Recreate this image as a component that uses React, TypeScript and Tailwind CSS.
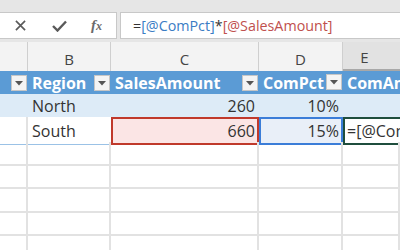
import React from 'react';

const font = { fontFamily: '"Open Sans", "Noto Sans", Arial, sans-serif' };

const Dropdown = () => (
  <span className="flex h-[16px] w-[16px] items-center justify-center border border-[#c6c6c6] bg-[#f4f4f4]">
    <svg width="8" height="5" viewBox="0 0 8 5">
      <path d="M0 0 L8 0 L4 4.5 Z" fill="#555" />
    </svg>
  </span>
);

const cols = 'grid grid-cols-[28px_83px_148px_84px_1fr]';

export default function App() {
  return (
    <div className="h-[250px] w-[400px] overflow-hidden bg-white" style={font}>
      {/* formula bar */}
      <div className="flex h-[42px] items-start gap-[3px] bg-[#e6e6e6] pt-[12px]">
        <div className="flex h-[27px] w-[117px] items-center border border-l-0 border-[#c8c8c8] bg-white text-[#5a5a5a]">
          <svg className="ml-[15px]" width="11" height="11" viewBox="0 0 12 12">
            <path d="M1 1 L11 11 M11 1 L1 11" stroke="#5a5a5a" strokeWidth="1.8" />
          </svg>
          <svg className="ml-[26px]" width="15" height="12" viewBox="0 0 15 12">
            <path d="M1 6 L5.5 10.5 L14 1.5" stroke="#5a5a5a" strokeWidth="2.4" fill="none" />
          </svg>
          <span className="ml-[24px] text-[15px] italic font-bold text-[#6a6a6a]" style={{ fontFamily: '"Liberation Serif", serif' }}>
            f<span className="text-[12px]">x</span>
          </span>
        </div>
        <div className="flex h-[27px] flex-1 items-center border border-r-0 border-[#c8c8c8] bg-white pl-[12px] text-[14.3px]">
          <span className="text-[#333]">=</span>
          <span className="text-[#3a7cc4]">[@ComPct]</span>
          <span className="text-[#333]">*</span>
          <span className="text-[#c0504d]">[@SalesAmount]</span>
        </div>
      </div>

      {/* column headers */}
      <div className={`${cols} h-[29px] bg-[#f3f3f3] text-[15px] text-[#444]`}>
        <div className="border-r border-[#cfcfcf]" />
        <div className="flex items-end justify-center border-r border-[#cfcfcf] pb-[1px]">B</div>
        <div className="flex items-end justify-center border-r border-[#cfcfcf] pb-[1px]">C</div>
        <div className="flex items-end justify-center border-r border-[#cfcfcf] pb-[1px]">D</div>
        <div className="flex items-end justify-center border-b-2 border-[#a8a8a8] bg-[#e2e2e2] pb-[1px] pr-[14px]">E</div>
      </div>

      {/* table header row */}
      <div className={`${cols} h-[23px] items-center bg-[#5b9bd5] text-[16px] font-bold text-white`}>
        <div className="flex justify-end pr-[1px]">
          <Dropdown />
        </div>
        <div className="flex items-center justify-between pl-[4px] pr-[1px]">
          <span>Region</span>
          <Dropdown />
        </div>
        <div className="flex items-center justify-between pl-[4px] pr-[1px]">
          <span>SalesAmount</span>
          <Dropdown />
        </div>
        <div className="relative flex items-center pl-[4px]">
          <span>ComPct</span>
          <span className="absolute right-[1px] top-[3px]">
            <Dropdown />
          </span>
        </div>
        <div className="overflow-hidden whitespace-nowrap pl-[4px]">ComAmount</div>
      </div>

      {/* North */}
      <div className={`${cols} h-[23px] items-center bg-[#ddebf7] text-[16px] text-[#333]`}>
        <div />
        <div className="pl-[4px]">North</div>
        <div className="pr-[4px] text-right">260</div>
        <div className="pr-[4px] text-right">10%</div>
        <div />
      </div>

      {/* South */}
      <div className={`${cols} h-[25px] text-[16px] text-[#333]`}>
        <div className="border-b border-r-2 border-b-[#9bc2e6] border-r-[#e2e2e2]" />
        <div className="flex items-center border-b border-[#9bc2e6] pl-[4px]">South</div>
        <div className="flex items-center justify-end border-2 border-[#c0392b] bg-[#fbe5e5] pr-[2px]">660</div>
        <div className="flex items-center justify-end border-2 border-[#3b7dd8] bg-[#e9eff8] pr-[2px]">15%</div>
        <div className="flex items-center overflow-hidden whitespace-nowrap border-2 border-r-0 border-[#1f4e3d] pl-[2px]">=[@ComPct]*[@SalesAmount]</div>
      </div>

      {/* empty grid */}
      {[0, 1, 2, 3, 4].map(i => (
        <div key={i} className={`${cols} h-[23.5px]`}>
          {[0, 1, 2, 3, 4].map(j => (
            <div key={j} className="border-b-2 border-r-2 border-[#e2e2e2]" />
          ))}
        </div>
      ))}
    </div>
  );
}
